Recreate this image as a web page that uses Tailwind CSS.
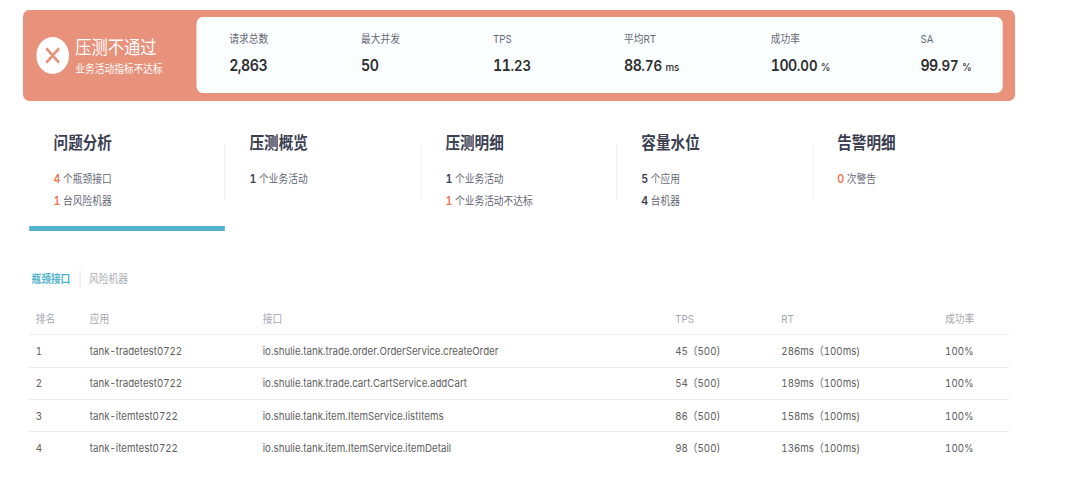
<!DOCTYPE html>
<html lang="zh-Hans">

<head>
    <meta charset="UTF-8" />
    <meta name="viewport" content="width=device-width, initial-scale=1.0" />
    <title>压测报告</title>
    <script src="https://cdn.jsdelivr.net/npm/@tailwindcss/browser@4"></script>
</head>

<body class="bg-white">
    <div class="w-full h-[502px] overflow-hidden">
    <div class="w-[1150px] h-[502px] origin-top-left scale-x-[0.885] pt-[10px] pl-[26px] font-['Inter','Noto_Sans_CJK_SC',sans-serif] text-[11px] leading-4 text-[#666876] whitespace-nowrap tabular-nums">

        <!-- 压测结果 -->
        <header class="w-[1121px] h-[90.5px] rounded-[7px] bg-[#e8917b] flex items-center pl-[14.5px] pr-[14.5px]">
            <svg class="size-[37px] shrink-0" viewBox="0 0 37 37" fill="none">
                <circle cx="18.5" cy="18.5" r="18.5" fill="#fff" />
                <path d="M12.2 12.2l12.6 12.6M24.8 12.2l-12.6 12.6" stroke="#e8917b" stroke-width="3" stroke-linecap="round" />
            </svg>
            <div class="ml-[7.5px] w-[136.5px] pt-[2px] text-white">
                <h1 class="text-[18.4px] leading-6">压测不通过</h1>
                <p class="mt-0.5">业务活动指标不达标</p>
            </div>
            <dl class="flex-1 h-[76px] rounded-[7px] bg-[#fafefe] grid grid-cols-[149px_149px_148px_166px_169px_1fr] pl-[37.5px] pt-[14px]">
                <div>
                    <dt>请求总数</dt>
                    <dd class="mt-1.5 text-[16px] leading-6 font-semibold tracking-[-0.6px] text-[#2f2f2f]">2,863</dd>
                </div>
                <div>
                    <dt>最大并发</dt>
                    <dd class="mt-1.5 text-[16px] leading-6 font-semibold tracking-[-0.5px] text-[#2f2f2f]">50</dd>
                </div>
                <div>
                    <dt>TPS</dt>
                    <dd class="mt-1.5 text-[16px] leading-6 font-semibold tracking-[-0.5px] text-[#2f2f2f]">11<span class="text-[15px] tracking-normal">.23</span></dd>
                </div>
                <div>
                    <dt>平均RT</dt>
                    <dd class="mt-1.5 text-[16px] leading-6 font-semibold tracking-[-0.5px] text-[#2f2f2f]">88<span class="text-[15px] tracking-normal">.76</span> <span class="text-[11px] font-medium tracking-normal">ms</span></dd>
                </div>
                <div>
                    <dt>成功率</dt>
                    <dd class="mt-1.5 text-[16px] leading-6 font-semibold tracking-[-0.6px] text-[#2f2f2f]">100<span class="text-[15px] tracking-normal">.00</span> <span class="text-[11px] font-medium tracking-normal">%</span></dd>
                </div>
                <div>
                    <dt>SA</dt>
                    <dd class="mt-1.5 text-[16px] leading-6 font-semibold tracking-[-0.5px] text-[#2f2f2f]">99<span class="text-[15px] tracking-normal">.97</span> <span class="text-[11px] font-medium tracking-normal">%</span></dd>
                </div>
            </dl>
        </header>

        <!-- 概要标签 -->
        <nav class="ml-[7px] mt-[30.5px] grid grid-cols-[repeat(5,221.4px)]">
            <section class="h-[100px] border-b-[5px] border-[#51b4ce] flex items-start">
                <div class="flex-1 pl-[27.5px]">
                    <h2 class="text-[16.5px] leading-6 font-bold text-[#3b3f51]">问题分析</h2>
                    <p class="mt-[13px] leading-[22px]"><b class="mr-[3px] text-xs font-semibold text-[#ed7654]">4</b>个瓶颈接口</p>
                    <p class="leading-[22px]"><b class="mr-[3px] text-xs font-semibold text-[#ed7654]">1</b>台风险机器</p>
                </div>
                <div class="mt-[13px] w-px h-14 bg-[#eeeeef]"></div>
            </section>
            <section class="h-[100px] flex items-start">
                <div class="flex-1 pl-[27.5px]">
                    <h2 class="text-[16.5px] leading-6 font-bold text-[#3b3f51]">压测概览</h2>
                    <p class="mt-[13px] leading-[22px]"><b class="mr-[3px] text-xs font-semibold text-[#3b3f51]">1</b>个业务活动</p>
                </div>
                <div class="mt-[13px] w-px h-14 bg-[#eeeeef]"></div>
            </section>
            <section class="h-[100px] flex items-start">
                <div class="flex-1 pl-[27.5px]">
                    <h2 class="text-[16.5px] leading-6 font-bold text-[#3b3f51]">压测明细</h2>
                    <p class="mt-[13px] leading-[22px]"><b class="mr-[3px] text-xs font-semibold text-[#3b3f51]">1</b>个业务活动</p>
                    <p class="leading-[22px]"><b class="mr-[3px] text-xs font-semibold text-[#ed7654]">1</b>个业务活动不达标</p>
                </div>
                <div class="mt-[13px] w-px h-14 bg-[#eeeeef]"></div>
            </section>
            <section class="h-[100px] flex items-start">
                <div class="flex-1 pl-[27.5px]">
                    <h2 class="text-[16.5px] leading-6 font-bold text-[#3b3f51]">容量水位</h2>
                    <p class="mt-[13px] leading-[22px]"><b class="mr-[3px] text-xs font-semibold text-[#3b3f51]">5</b>个应用</p>
                    <p class="leading-[22px]"><b class="mr-[3px] text-xs font-semibold text-[#3b3f51]">4</b>台机器</p>
                </div>
                <div class="mt-[13px] w-px h-14 bg-[#eeeeef]"></div>
            </section>
            <section class="h-[100px] flex items-start">
                <div class="flex-1 pl-[27.5px]">
                    <h2 class="text-[16.5px] leading-6 font-bold text-[#3b3f51]">告警明细</h2>
                    <p class="mt-[13px] leading-[22px]"><b class="mr-[3px] text-xs font-semibold text-[#ed7654]">0</b>次警告</p>
                </div>
            </section>
        </nav>

        <!-- 问题分析切换 -->
        <div class="ml-[9.5px] mt-[40px] h-4 flex items-center">
            <button class="pr-[10px] font-bold text-[#51b4ce]">瓶颈接口</button>
            <button class="border-l border-[#e0e0e6] pl-[10px] text-[#a9adb5]">风险机器</button>
        </div>

        <!-- 瓶颈接口列表 -->
        <div class="ml-[7px] mt-[16px] w-[1107px] text-[#606060]">
            <div class="h-[32.4px] grid grid-cols-[61px_195.5px_466px_120px_185px_1fr] items-center pl-[7.4px] border-b border-[#ededed] text-[#a5a7b0]">
                <span>排名</span><span>应用</span><span>接口</span><span>TPS</span><span>RT</span><span>成功率</span>
            </div>
            <div class="h-[32.3px] grid grid-cols-[61px_195.5px_466px_120px_185px_1fr] items-center pl-[7.4px] border-b border-[#ededed]">
                <span>1</span><span>tank-tradetest0722</span><span>io.shulie.tank.trade.order.OrderService.createOrder</span><span>45（500)</span><span>286ms（100ms)</span><span>100%</span>
            </div>
            <div class="h-[32.3px] grid grid-cols-[61px_195.5px_466px_120px_185px_1fr] items-center pl-[7.4px] border-b border-[#ededed]">
                <span>2</span><span>tank-tradetest0722</span><span>io.shulie.tank.trade.cart.CartService.addCart</span><span>54（500)</span><span>189ms（100ms)</span><span>100%</span>
            </div>
            <div class="h-[32.3px] grid grid-cols-[61px_195.5px_466px_120px_185px_1fr] items-center pl-[7.4px] border-b border-[#ededed]">
                <span>3</span><span>tank-itemtest0722</span><span>io.shulie.tank.item.ItemService.listItems</span><span>86（500)</span><span>158ms（100ms)</span><span>100%</span>
            </div>
            <div class="h-[32.3px] grid grid-cols-[61px_195.5px_466px_120px_185px_1fr] items-center pl-[7.4px]">
                <span>4</span><span>tank-itemtest0722</span><span>io.shulie.tank.item.ItemService.itemDetail</span><span>98（500)</span><span>136ms（100ms)</span><span>100%</span>
            </div>
        </div>

    </div>
    </div>
</body>

</html>
